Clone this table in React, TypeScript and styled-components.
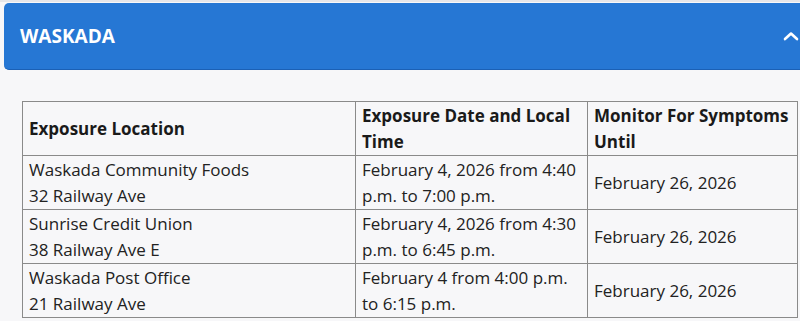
import React from "react";
import styled, { createGlobalStyle } from "styled-components";

const GlobalStyle = createGlobalStyle`
  html, body {
    margin: 0;
    padding: 0;
    background: #f7f7f9;
    overflow: hidden;
  }
  body {
    font-family: "Open Sans", "Noto Sans", sans-serif;
    color: #222;
  }
`;

interface Exposure {
  place: string;
  address: string;
  when: string;
  until: string;
}

const exposures: Exposure[] = [
  {
    place: "Waskada Community Foods",
    address: "32 Railway Ave",
    when: "February 4, 2026 from 4:40 p.m. to 7:00 p.m.",
    until: "February 26, 2026",
  },
  {
    place: "Sunrise Credit Union",
    address: "38 Railway Ave E",
    when: "February 4, 2026 from 4:30 p.m. to 6:45 p.m.",
    until: "February 26, 2026",
  },
  {
    place: "Waskada Post Office",
    address: "21 Railway Ave",
    when: "February 4 from 4:00 p.m. to 6:15 p.m.",
    until: "February 26, 2026",
  },
];

const Page = styled.div`
  width: 800px;
  border-top: 2px solid #e6e6e9;
  padding-top: 1px;
`;

const Panel = styled.section`
  margin-left: 4px;
  width: 810px;
`;

const Header = styled.button`
  display: flex;
  align-items: center;
  justify-content: space-between;
  width: 100%;
  height: 67px;
  padding: 0 15px 0 16px;
  border: none;
  border-bottom: 1px solid #1b60b5;
  border-radius: 5px;
  background: #2677d4;
  color: #fff;
  font-family: "Open Sans", "Noto Sans", sans-serif;
  font-size: 19px;
  font-weight: 700;
  cursor: pointer;
  box-sizing: border-box;
`;

const Chevron = styled.svg`
  width: 16px;
  height: 10px;
`;

const Body = styled.div`
  padding: 31px 0 0 18px;
`;

const Table = styled.table`
  width: 775px;
  border-collapse: collapse;
  font-size: 17px;
  line-height: 26px;
  table-layout: fixed;
`;

const Th = styled.th`
  border: 1px solid #8a8a8a;
  padding: 0.5px 6px;
  text-align: left;
  font-weight: 700;
  color: #1a1a1a;
  vertical-align: middle;
`;

const Td = styled.td`
  border: 1px solid #8a8a8a;
  padding: 0.5px 6px;
  vertical-align: middle;
  color: #222;
`;

export default function App() {
  return (
    <>
      <GlobalStyle />
      <Page>
        <Panel>
          <Header>
            <span>WASKADA</span>
            <Chevron viewBox="0 0 16 10">
              <path
                d="M2 8 L8 2.5 L14 8"
                fill="none"
                stroke="#fff"
                strokeWidth="2.6"
                strokeLinecap="round"
                strokeLinejoin="round"
              />
            </Chevron>
          </Header>
          <Body>
            <Table>
              <colgroup>
                <col style={{ width: 333 }} />
                <col style={{ width: 232 }} />
                <col style={{ width: 210 }} />
              </colgroup>
              <thead>
                <tr>
                  <Th>Exposure Location</Th>
                  <Th>Exposure Date and Local Time</Th>
                  <Th>Monitor For Symptoms Until</Th>
                </tr>
              </thead>
              <tbody>
                {exposures.map((e) => (
                  <tr key={e.place}>
                    <Td>
                      {e.place}
                      <br />
                      {e.address}
                    </Td>
                    <Td>{e.when}</Td>
                    <Td>{e.until}</Td>
                  </tr>
                ))}
              </tbody>
            </Table>
          </Body>
        </Panel>
      </Page>
    </>
  );
}
